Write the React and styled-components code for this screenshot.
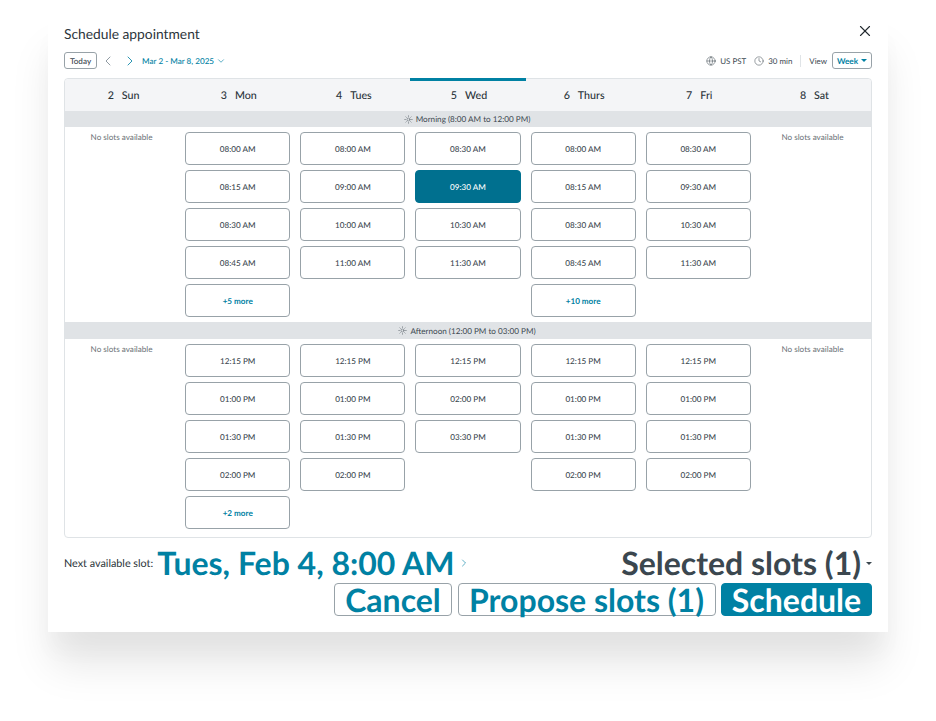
import styled, { createGlobalStyle } from "styled-components";
import { ChevronDown, ChevronLeft, ChevronRight, Clock, Globe, Sun, X } from "lucide-react";

const teal = "#0081a3";
const ink = "#3b474f";

const days = [
  { num: 2, name: "Sun" },
  { num: 3, name: "Mon" },
  { num: 4, name: "Tues" },
  { num: 5, name: "Wed", current: true },
  { num: 6, name: "Thurs" },
  { num: 7, name: "Fri" },
  { num: 8, name: "Sat" },
];

const morning = [
  [],
  ["08:00 AM", "08:15 AM", "08:30 AM", "08:45 AM", "+5 more"],
  ["08:00 AM", "09:00 AM", "10:00 AM", "11:00 AM"],
  ["08:30 AM", "09:30 AM", "10:30 AM", "11:30 AM"],
  ["08:00 AM", "08:15 AM", "08:30 AM", "08:45 AM", "+10 more"],
  ["08:30 AM", "09:30 AM", "10:30 AM", "11:30 AM"],
  [],
];

const afternoon = [
  [],
  ["12:15 PM", "01:00 PM", "01:30 PM", "02:00 PM", "+2 more"],
  ["12:15 PM", "01:00 PM", "01:30 PM", "02:00 PM"],
  ["12:15 PM", "02:00 PM", "03:30 PM"],
  ["12:15 PM", "01:00 PM", "01:30 PM", "02:00 PM"],
  ["12:15 PM", "01:00 PM", "01:30 PM", "02:00 PM"],
  [],
];

const GlobalStyle = createGlobalStyle`
  html, body {
    margin: 0;
    background: #fff;
  }
  body {
    font-family: Lato, "Liberation Sans", sans-serif;
    color: ${ink};
    text-rendering: geometricPrecision;
  }
`;

const Page = styled.div`
  width: 936px;
  height: 721px;
  overflow: hidden;
  padding: 14px 48px 0;
  box-sizing: border-box;
`;

const Card = styled.div`
  width: 840px;
  height: 618px;
  box-sizing: border-box;
  padding: 9px 16px 0;
  background: #fff;
  box-shadow: 0 36px 40px -4px rgba(0, 0, 0, 0.1), 0 22px 20px rgba(0, 0, 0, 0.02);
`;

const TitleRow = styled.div`
  display: flex;
  justify-content: space-between;
  align-items: center;
  height: 20px;
`;

const Title = styled.h1`
  margin: 0;
  font-size: 13.8px;
  font-weight: 400;
  color: #2b343a;
`;

const CloseBtn = styled.span`
  display: flex;
  margin-right: -2px;
  margin-top: -4px;
  color: #22292e;
`;

const Toolbar = styled.div`
  display: flex;
  justify-content: space-between;
  align-items: center;
  height: 17px;
  margin-top: 9px;
  margin-bottom: 9px;
`;

const Group = styled.div`
  display: flex;
  align-items: center;
`;

const TodayBtn = styled.span`
  display: flex;
  align-items: center;
  justify-content: center;
  box-sizing: border-box;
  width: 33px;
  height: 17px;
  border: 1px solid #98a2a8;
  border-radius: 3px;
  font-size: 8.15px;
  font-weight: 500;
`;

const NavIcon = styled.span`
  display: flex;
  width: ${(p) => p.$width || 22}px;
  justify-content: center;
  color: ${(p) => (p.$accent ? teal : "#7a8790")};
`;

const DateRange = styled.span`
  display: flex;
  align-items: center;
  gap: 2px;
  margin-left: 1px;
  font-size: 8.15px;
  font-weight: 500;
  color: ${teal};
`;

const Meta = styled.span`
  display: flex;
  align-items: center;
  gap: 4px;
  margin-left: ${(p) => p.$gap || 0}px;
  font-size: 7.95px;
  color: ${ink};
`;

const Divider = styled.span`
  width: 1px;
  height: 12px;
  margin: 0 8px;
  background: #e0e4e7;
`;

const ViewSelect = styled.span`
  display: flex;
  align-items: center;
  justify-content: center;
  gap: 3px;
  box-sizing: border-box;
  width: 40px;
  height: 17px;
  margin-left: 5px;
  border: 1px solid #98a2a8;
  border-radius: 3px;
  font-size: 8.15px;
  font-weight: 700;
  color: ${teal};
`;

const Caret = styled.span`
  width: 0;
  height: 0;
  border-left: ${(p) => p.$size}px solid transparent;
  border-right: ${(p) => p.$size}px solid transparent;
  border-top: ${(p) => p.$size}px solid ${(p) => p.$color};
`;

const Table = styled.div`
  position: relative;
  height: 460px;
  box-sizing: border-box;
  border: 1px solid #dfe3e6;
  border-radius: 4px;
`;

const HeaderRow = styled.div`
  display: grid;
  grid-template-columns: repeat(7, 1fr);
  height: 32px;
  background: #f4f5f7;
  border-radius: 4px 4px 0 0;
`;

const DayHead = styled.div`
  position: relative;
  display: flex;
  align-items: center;
  justify-content: center;
  gap: 8px;
  padding: 1px 0 0 2px;
  font-size: 10.7px;
  font-weight: 500;
  color: #2b343a;

  ${(p) =>
    p.$current &&
    `&::before {
      content: "";
      position: absolute;
      top: -1px;
      left: 0;
      right: 0;
      height: 3px;
      background: ${teal};
    }`}
`;

const DayNum = styled.span`
  margin-bottom: 1px;
`;

const Band = styled.div`
  display: flex;
  align-items: center;
  justify-content: center;
  gap: 3px;
  height: ${(p) => p.$height}px;
  padding-right: 2px;
  background: #e0e3e6;
  font-size: 8.15px;
  color: ${ink};
`;

const SlotGrid = styled.div`
  display: grid;
  grid-template-columns: repeat(7, 1fr);
  height: ${(p) => p.$height}px;
  box-sizing: border-box;
  padding-top: 5px;
`;

const Column = styled.div`
  display: flex;
  flex-direction: column;
  gap: 5px;
  padding: 0 5px;
  min-width: 0;
`;

const NoSlots = styled.div`
  padding-right: 2px;
  font-size: 8.15px;
  color: #6b7278;
  text-align: center;
`;

const Slot = styled.div`
  display: flex;
  align-items: center;
  justify-content: center;
  box-sizing: border-box;
  height: 33px;
  border: 1px solid ${(p) => (p.$selected ? "#00708f" : "#98a2a8")};
  border-radius: 4px;
  background: ${(p) => (p.$selected ? "#00708f" : "#fff")};
  color: ${(p) => (p.$selected ? "#fff" : p.$more ? teal : ink)};
  font-size: 8.15px;
  font-weight: ${(p) => (p.$more ? 700 : 500)};
`;

const Footer = styled.div`
  display: flex;
  flex-wrap: wrap;
  justify-content: space-between;
  align-items: center;
  row-gap: 1px;
  margin-top: 6px;
`;

const NextSlot = styled.div`
  display: flex;
  align-items: center;
  gap: 4px;
  height: 38px;
  font-size: 10.8px;
  color: #2b343a;
`;

const NextLink = styled.span`
  font-size: 32px;
  font-weight: 700;
  line-height: 38px;
  color: ${teal};
`;

const Selected = styled.div`
  display: flex;
  align-items: center;
  gap: 5px;
  font-size: 32px;
  font-weight: 700;
  line-height: 38px;
  color: ${ink};
`;

const Actions = styled.div`
  display: flex;
  justify-content: flex-end;
  gap: 5.5px;
  width: 100%;
`;

const ActionBtn = styled.span`
  display: flex;
  align-items: center;
  justify-content: center;
  box-sizing: border-box;
  width: ${(p) => p.$width}px;
  height: 33px;
  border: 1px solid ${(p) => (p.$primary ? teal : "#98a2a8")};
  border-radius: 4px;
  background: ${(p) => (p.$primary ? teal : "#fff")};
  color: ${(p) => (p.$primary ? "#fff" : teal)};
  font-size: 32px;
  font-weight: 700;
  white-space: nowrap;
`;

function Slots({ columns, height, selected }) {
  return (
    <SlotGrid $height={height}>
      {columns.map((slots, i) => (
        <Column key={i}>
          {slots.length === 0 && <NoSlots>No slots available</NoSlots>}
          {slots.map((s) => (
            <Slot key={s} $more={s.startsWith("+")} $selected={selected === `${i}-${s}`}>
              {s}
            </Slot>
          ))}
        </Column>
      ))}
    </SlotGrid>
  );
}

export default function App() {
  return (
    <Page>
      <GlobalStyle />
      <Card>
        <TitleRow>
          <Title>Schedule appointment</Title>
          <CloseBtn>
            <X size={18} strokeWidth={1.5} />
          </CloseBtn>
        </TitleRow>
        <Toolbar>
          <Group>
            <TodayBtn>Today</TodayBtn>
            <NavIcon>
              <ChevronLeft size={16} strokeWidth={1.25} />
            </NavIcon>
            <NavIcon $accent>
              <ChevronRight size={16} strokeWidth={1.25} />
            </NavIcon>
            <DateRange>
              Mar 2 - Mar 8, 2025
              <ChevronDown size={10} strokeWidth={1.5} />
            </DateRange>
          </Group>
          <Group>
            <Meta>
              <Globe size={10} strokeWidth={1.25} />
              US PST
            </Meta>
            <Meta $gap={8}>
              <Clock size={10} strokeWidth={1.25} />
              30 min
            </Meta>
            <Divider />
            <Meta>View</Meta>
            <ViewSelect>
              Week
              <Caret $size={3} $color={teal} />
            </ViewSelect>
          </Group>
        </Toolbar>
        <Table>
          <HeaderRow>
            {days.map((d) => (
              <DayHead key={d.num} $current={d.current}>
                <DayNum>{d.num}</DayNum>
                <span>{d.name}</span>
              </DayHead>
            ))}
          </HeaderRow>
          <Band $height={16}>
            <Sun size={9} strokeWidth={1.25} />
            Morning (8:00 AM to 12:00 PM)
          </Band>
          <Slots columns={morning} height={195} selected="3-09:30 AM" />
          <Band $height={17}>
            <Sun size={9} strokeWidth={1.25} />
            Afternoon (12:00 PM to 03:00 PM)
          </Band>
          <Slots columns={afternoon} height={194} />
        </Table>
        <Footer>
          <NextSlot>
            Next available slot:
            <NextLink>Tues, Feb 4, 8:00 AM</NextLink>
            <NavIcon $accent $width={12}>
              <ChevronRight size={14} strokeWidth={1.25} />
            </NavIcon>
          </NextSlot>
          <Selected>
            Selected slots (1)
            <Caret $size={3} $color={ink} />
          </Selected>
          <Actions>
            <ActionBtn $width={118}>Cancel</ActionBtn>
            <ActionBtn $width={258}>Propose slots (1)</ActionBtn>
            <ActionBtn $width={151} $primary>
              Schedule
            </ActionBtn>
          </Actions>
        </Footer>
      </Card>
    </Page>
  );
}
